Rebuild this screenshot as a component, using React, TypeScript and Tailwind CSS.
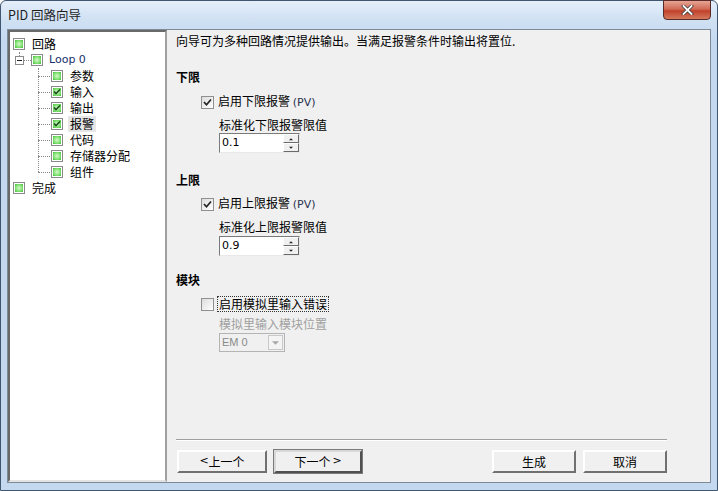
import type { ReactNode } from 'react';

const cjk = "font-['Noto_Sans_CJK_SC','Noto_Sans',sans-serif]";

function TreeIcon({ checked = false }: { checked?: boolean }) {
  return (
    <span className="flex h-[12px] w-[12px] shrink-0 items-center justify-center border border-[#8a8a8a] bg-white">
      <span className="relative block h-[8px] w-[8px] bg-[radial-gradient(circle_at_50%_50%,#d8f8d0,#7ee070_60%,#3dbb32)]">
        {checked ? (
          <svg viewBox="0 0 8 8" className="absolute left-0 top-0 h-[8px] w-[8px]">
            <path d="M1 3.5 L3 5.5 L7 1.5" stroke="#1d4d1a" strokeWidth="1.6" fill="none" />
          </svg>
        ) : null}
      </span>
    </span>
  );
}

function TreeChild({ label, checked, selected }: { label: string; checked?: boolean; selected?: boolean }) {
  return (
    <div className="flex h-[16px] items-center">
      <span className="mr-[1px] block w-[12px] border-t border-dotted border-[#8a8a8a]" />
      <TreeIcon checked={checked} />
      <span className={`ml-[5px] px-[2px] leading-[16px] ${selected ? 'bg-[#e6e6e6]' : ''}`}>{label}</span>
    </div>
  );
}

function CheckBox({ checked }: { checked?: boolean }) {
  return (
    <span className="flex h-[13px] w-[13px] shrink-0 items-center justify-center border border-[#8e8f8f] bg-[linear-gradient(135deg,#dcdcdc,#fff)]">
      {checked ? (
        <svg viewBox="0 0 9 9" className="h-[9px] w-[9px]">
          <path d="M1 4 L3.5 6.8 L8 1.5" stroke="#222" strokeWidth="1.7" fill="none" />
        </svg>
      ) : null}
    </span>
  );
}

function SpinBox({ value }: { value: string }) {
  return (
    <div className="flex h-[20px] w-[81px] border-t border-l border-[#7a7a7a] border-b-[#e8e8e8] border-r-[#e8e8e8] border-b border-r bg-white">
      <span className="flex-1 pl-[2px] font-['DejaVu_Sans',sans-serif] text-[11px] leading-[18px] text-black">{value}</span>
      <div className="flex w-[16px] flex-col">
        {['M1 5 L4 2 L7 5 Z', 'M1 1 L4 4 L7 1 Z'].map((d) => (
          <span
            key={d}
            className="flex h-[9px] items-center justify-center border border-t-white border-l-white border-b-[#6a6a6a] border-r-[#6a6a6a] bg-[#f0f0f0]"
          >
            <svg viewBox="0 0 8 6" className="h-[4px] w-[6px]">
              <path d={d} fill="#222" />
            </svg>
          </span>
        ))}
      </div>
    </div>
  );
}

function Button({ children, primary, w = 'w-[90px]' }: { children: ReactNode; primary?: boolean; w?: string }) {
  return (
    <div
      className={`flex h-[23px] ${w} items-center justify-center bg-[#f0f0f0] text-[12px] ${
        primary
          ? 'border-2 border-t-[#d8d8d8] border-l-[#d8d8d8] border-b-[#505050] border-r-[#505050] outline outline-1 outline-[#7a7a7a]'
          : 'border-2 border-t-white border-l-white border-b-[#707070] border-r-[#707070]'
      }`}
    >
      {children}
    </div>
  );
}

export default function App() {
  return (
    <div className={`${cjk} h-[491px] w-[718px] overflow-hidden bg-white text-[12px] text-black`}>
      <div className="flex h-full w-full flex-col rounded-t-[6px] border border-[#3f5670] bg-[linear-gradient(#e4eefa,#cfe0f3_20px,#c4d9f0_40px,#c4d9f0)]">
        {/* title bar */}
        <div className="relative flex h-[28px] shrink-0 items-center pl-[7px]">
          <span className="text-[12.5px] leading-none text-[#1e1e1e]">PID 回路向导</span>
          <div className="absolute right-[6px] top-[-1px] flex h-[20px] w-[48px] items-center justify-center rounded-b-[4px] border border-[#5a2a28] bg-[linear-gradient(#e7a595,#d26a55_45%,#c1402b_55%,#d47a5d)]">
            <svg viewBox="0 0 12 10" className="h-[10px] w-[13px]">
              <path d="M2 1 L10 9 M10 1 L2 9" stroke="#3b3b3b" strokeWidth="3.4" strokeLinecap="square" />
              <path d="M2 1 L10 9 M10 1 L2 9" stroke="#fff" strokeWidth="1.8" strokeLinecap="square" />
            </svg>
          </div>
        </div>

        {/* client */}
        <div className="mx-[6px] mb-[7px] flex min-h-0 flex-1 border border-[#7c8a99] bg-[#f0f0f0]">
          {/* tree */}
          <div className="h-full w-[159px] shrink-0 border-2 border-t-[#696969] border-l-[#696969] border-b-[#e3e3e3] border-r-[#a0a0a0] bg-white pl-[3px] pt-[4px]">
            <div className="flex h-[16px] items-center">
              <TreeIcon />
              <span className="ml-[7px] leading-[16px]">回路</span>
            </div>
            <div className="flex h-[16px] items-center">
              <div className="relative flex w-[18px] items-center pl-[2px]">
                <span className="absolute left-[6px] top-[-4px] h-[4px] border-l border-dotted border-[#8a8a8a]" />
                <span className="flex h-[9px] w-[9px] items-center justify-center border border-[#8a8a8a] bg-white">
                  <span className="block h-px w-[5px] bg-[#222]" />
                </span>
                <span className="block w-[7px] border-t border-dotted border-[#8a8a8a]" />
              </div>
              <TreeIcon />
              <span className="ml-[6px] font-['DejaVu_Sans',sans-serif] text-[11px] leading-[16px] text-[#17306a]">Loop 0</span>
            </div>
            <div className="relative pl-[25px]">
              <span className="absolute left-[25px] top-0 h-[104px] border-l border-dotted border-[#8a8a8a]" />
              <TreeChild label="参数" />
              <TreeChild label="输入" checked />
              <TreeChild label="输出" checked />
              <TreeChild label="报警" checked selected />
              <TreeChild label="代码" />
              <TreeChild label="存储器分配" />
              <TreeChild label="组件" />
            </div>
            <div className="flex h-[16px] items-center">
              <TreeIcon />
              <span className="ml-[7px] leading-[16px]">完成</span>
            </div>
          </div>

          {/* right pane */}
          <div className="flex min-w-0 flex-1 flex-col pl-[9px] pr-[43px] pt-[3px]">
            <p className="leading-[16px]">向导可为多种回路情况提供输出。当满足报警条件时输出将置位.</p>

            <p className="mt-[20px] font-bold leading-[16px]">下限</p>
            <div className="ml-[25px] mt-[9px] flex h-[16px] items-center">
              <CheckBox checked />
              <span className="ml-[4px]">
                启用下限报警 <span className="font-['DejaVu_Sans',sans-serif] text-[11px] text-[#2a3350]">(PV)</span>
              </span>
            </div>
            <div className="ml-[43px] mt-[7px]">
              <p className="leading-[16px]">标准化下限报警限值</p>
              <SpinBox value="0.1" />
            </div>

            <p className="mt-[19px] font-bold leading-[16px]">上限</p>
            <div className="ml-[25px] mt-[8px] flex h-[16px] items-center">
              <CheckBox checked />
              <span className="ml-[4px]">
                启用上限报警 <span className="font-['DejaVu_Sans',sans-serif] text-[11px] text-[#2a3350]">(PV)</span>
              </span>
            </div>
            <div className="ml-[43px] mt-[7px]">
              <p className="leading-[16px]">标准化上限报警限值</p>
              <div className="mt-px">
                <SpinBox value="0.9" />
              </div>
            </div>

            <p className="mt-[16px] font-bold leading-[16px]">模块</p>
            <div className="ml-[25px] mt-[8px] flex h-[16px] items-center">
              <CheckBox />
              <span className="ml-[3px] border border-dotted border-[#333] px-px leading-[14px]">启用模拟里输入错误</span>
            </div>
            <div className="ml-[43px] mt-[4px]">
              <p className="leading-[16px] text-[#a0a0a0]">模拟里输入模块位置</p>
              <div className="mt-px flex h-[19px] w-[66px] border border-[#b4b4b4] bg-[#f0f0f0]">
                <span className="flex-1 pl-[2px] font-['Liberation_Sans',sans-serif] text-[11px] leading-[17px] text-[#8a8a8a]">EM 0</span>
                <span className="m-px flex w-[15px] items-center justify-center border border-[#c8c8c8] bg-[#f4f4f4]">
                  <svg viewBox="0 0 8 4" className="h-[4px] w-[7px]">
                    <path d="M0 0 L8 0 L4 4 Z" fill="#a8a8a8" />
                  </svg>
                </span>
              </div>
            </div>

            <div className="mt-auto border-t border-b border-t-[#a0a0a0] border-b-white" />
            <div className="mb-[9px] mt-[9px] flex items-center pl-px">
              <Button>
                <span className="font-['DejaVu_Sans',sans-serif] text-[11px]">&lt;</span>上一个
              </Button>
              <div className="ml-[7px]">
                <Button primary w="w-[88px]">
                  下一个 <span className="ml-[2px] font-['DejaVu_Sans',sans-serif] text-[11px]">&gt;</span>
                </Button>
              </div>
              <div className="ml-auto flex gap-[7px]">
                <Button w="w-[84px]">生成</Button>
                <Button w="w-[84px]">取消</Button>
              </div>
            </div>
          </div>
        </div>
      </div>
    </div>
  );
}
